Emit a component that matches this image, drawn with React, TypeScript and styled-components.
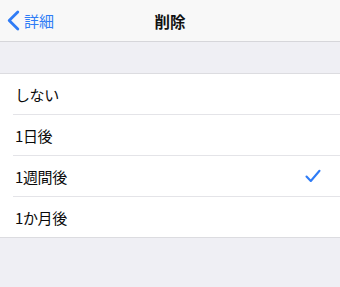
import React, { useState } from 'react';
import styled, { createGlobalStyle } from 'styled-components';

const GlobalStyle = createGlobalStyle`
  html, body {
    margin: 0;
    padding: 0;
    background: #efeff4;
  }
  body {
    font-family: "Noto Sans CJK JP", "Noto Sans", sans-serif;
    -webkit-font-smoothing: antialiased;
  }
`;

const Page = styled.div`
  width: 340px;
  height: 287px;
  background: #efeff4;
  display: flex;
  flex-direction: column;
`;

const NavBar = styled.div`
  height: 42px;
  background: #f8f8f8;
  border-bottom: 1px solid #d6d6da;
  display: grid;
  grid-template-columns: 1fr auto 1fr;
  align-items: center;
  box-sizing: border-box;
`;

const BackButton = styled.button`
  display: flex;
  align-items: center;
  gap: 4px;
  background: none;
  border: none;
  padding: 0 0 0 7px;
  color: #2f7cf6;
  font-family: inherit;
  font-size: 15px;
  cursor: pointer;
  justify-self: start;
`;

const Title = styled.div`
  font-size: 15.5px;
  font-weight: 700;
  color: #111;
`;

const Spacer = styled.div`
  height: 31px;
`;

const Group = styled.div`
  background: #fff;
  border-top: 1px solid #dcdce0;
  border-bottom: 1px solid #dcdce0;
`;

const Row = styled.div<{ $last?: boolean }>`
  height: 40px;
  display: flex;
  align-items: center;
  justify-content: space-between;
  padding: 0 19px 0 15px;
  position: relative;
  cursor: pointer;

  &::after {
    content: '';
    display: ${p => (p.$last ? 'none' : 'block')};
    position: absolute;
    left: 13px;
    right: 0;
    bottom: -1px;
    height: 1px;
    background: #e4e4e8;
  }

  & + & {
    margin-top: 1px;
  }
`;

const Label = styled.span`
  font-size: 15px;
  color: #0a0a0a;
  letter-spacing: -0.4px;
`;

const Check = () => (
  <svg width="16" height="14" viewBox="0 0 16 14">
    <path d="M1.5 7.5 L5.8 12 L14.5 1.8" fill="none" stroke="#2f7cf6" strokeWidth="2.1" strokeLinecap="round" strokeLinejoin="round" />
  </svg>
);

const Chevron = () => (
  <svg width="13" height="21" viewBox="0 0 13 21">
    <path d="M10.8 2 L2.2 10.5 L10.8 19" fill="none" stroke="#2f7cf6" strokeWidth="2.8" strokeLinecap="round" strokeLinejoin="round" />
  </svg>
);

const options = ['しない', '1日後', '1週間後', '1か月後'];

export default function App() {
  const [selected, setSelected] = useState(2);

  return (
    <>
      <GlobalStyle />
      <Page>
        <NavBar>
          <BackButton>
            <Chevron />
            詳細
          </BackButton>
          <Title>削除</Title>
          <div />
        </NavBar>
        <Spacer />
        <Group>
          {options.map((o, i) => (
            <Row key={o} $last={i === options.length - 1} onClick={() => setSelected(i)}>
              <Label>{o}</Label>
              {selected === i && <Check />}
            </Row>
          ))}
        </Group>
      </Page>
    </>
  );
}
